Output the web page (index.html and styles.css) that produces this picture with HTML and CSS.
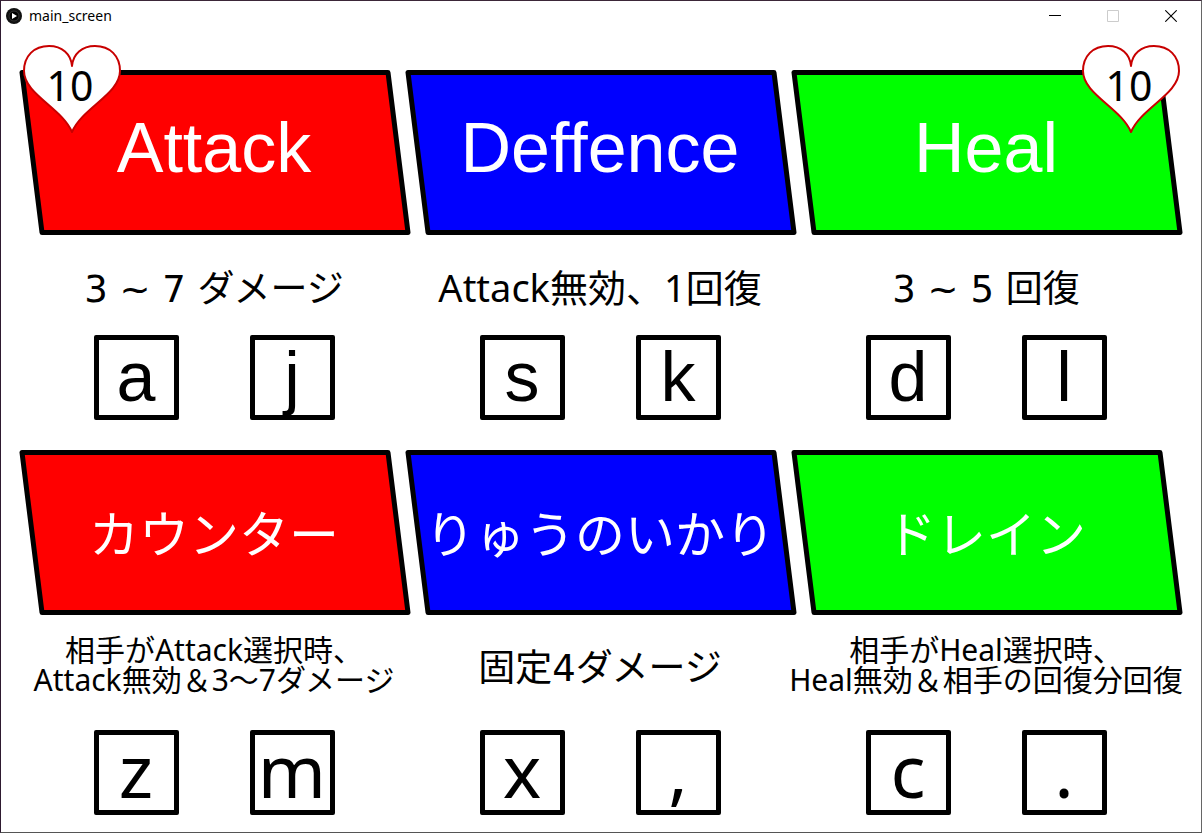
FILE: index.html
```html
<!DOCTYPE html>
<html lang="ja">
<head>
<meta charset="utf-8">
<title>main_screen</title>
<link rel="stylesheet" href="styles.css">
</head>
<body>
<div class="window">
  <header class="titlebar">
    <svg class="app-icon" viewBox="0 0 16 16" aria-hidden="true"><circle cx="8" cy="8" r="8" fill="#111"/><circle cx="8" cy="8" r="5" fill="#000" stroke="#333"/><path d="M6 5l5 3-5 3z" fill="#fff"/></svg>
    <h1 class="titlebar-text">main_screen</h1>
    <div class="controls">
      <button class="control" type="button" aria-label="Minimize"><svg viewBox="0 0 12 12"><path d="M0 5.5h12" stroke="#000"/></svg></button>
      <button class="control" type="button" aria-label="Maximize" disabled><svg viewBox="0 0 12 12"><path d="M.5.5h11v11H.5z" fill="none" stroke="#ccc"/></svg></button>
      <button class="control" type="button" aria-label="Close"><svg viewBox="0 0 12 12"><path d="M.3.3l11.4 11.4M11.7.3L.3 11.7" stroke="#000" stroke-width="1.1"/></svg></button>
    </div>
  </header>
  <main class="board">
    <div class="life life-left">
      <svg class="heart" viewBox="0 0 100 90" aria-hidden="true"><path d="M50 22C49 10 40 2 27 2C12 2 2 12 2 27C2 50 40 64 50 88C60 64 98 50 98 27C98 12 88 2 73 2C60 2 51 10 50 22z"/></svg>
      <span class="life-value">10</span>
    </div>
    <div class="life life-right">
      <svg class="heart" viewBox="0 0 100 90" aria-hidden="true"><path d="M50 22C49 10 40 2 27 2C12 2 2 12 2 27C2 50 40 64 50 88C60 64 98 50 98 27C98 12 88 2 73 2C60 2 51 10 50 22z"/></svg>
      <span class="life-value">10</span>
    </div>

    <section class="row row-basic">
      <article class="card red">
        <div class="banner"><svg class="shape" viewBox="0 0 386 160" preserveAspectRatio="none" aria-hidden="true"><path d="M1 .5H367L387 160.5H21z"/></svg><h2 class="name">Attack</h2></div>
        <p class="note numeric">3 ~ 7 ダメージ</p>
        <div class="keys"><button class="key" type="button">a</button><button class="key" type="button">j</button></div>
      </article>
      <article class="card blue">
        <div class="banner"><svg class="shape" viewBox="0 0 386 160" preserveAspectRatio="none" aria-hidden="true"><path d="M1 .5H367L387 160.5H21z"/></svg><h2 class="name">Deffence</h2></div>
        <p class="note">Attack無効、1回復</p>
        <div class="keys"><button class="key" type="button">s</button><button class="key" type="button">k</button></div>
      </article>
      <article class="card green">
        <div class="banner"><svg class="shape" viewBox="0 0 386 160" preserveAspectRatio="none" aria-hidden="true"><path d="M1 .5H367L387 160.5H21z"/></svg><h2 class="name">Heal</h2></div>
        <p class="note numeric">3 ~ 5 回復</p>
        <div class="keys"><button class="key" type="button">d</button><button class="key" type="button">l</button></div>
      </article>
    </section>

    <section class="row row-special">
      <article class="card red">
        <div class="banner"><svg class="shape" viewBox="0 0 386 160" preserveAspectRatio="none" aria-hidden="true"><path d="M1 .5H367L387 160.5H21z"/></svg><h2 class="name">カウンター</h2></div>
        <p class="note small">相手がAttack選択時、<br>Attack無効＆3～7ダメージ</p>
        <div class="keys"><button class="key" type="button">z</button><button class="key" type="button">m</button></div>
      </article>
      <article class="card blue">
        <div class="banner"><svg class="shape" viewBox="0 0 386 160" preserveAspectRatio="none" aria-hidden="true"><path d="M1 .5H367L387 160.5H21z"/></svg><h2 class="name">りゅうのいかり</h2></div>
        <p class="note numeric">固定4ダメージ</p>
        <div class="keys"><button class="key" type="button">x</button><button class="key" type="button">,</button></div>
      </article>
      <article class="card green">
        <div class="banner"><svg class="shape" viewBox="0 0 386 160" preserveAspectRatio="none" aria-hidden="true"><path d="M1 .5H367L387 160.5H21z"/></svg><h2 class="name">ドレイン</h2></div>
        <p class="note small">相手がHeal選択時、<br>Heal無効＆相手の回復分回復</p>
        <div class="keys"><button class="key" type="button">c</button><button class="key" type="button">.</button></div>
      </article>
    </section>
  </main>
</div>
</body>
</html>
```
FILE: styles.css
```css
* { box-sizing: border-box; }
body { margin: 0; background: #fff; color: #000; }
h1, h2, p { margin: 0; font-weight: 400; }
button { padding: 0; background: none; color: inherit; }

.window {
  min-height: 100vh;
  border: 1px solid;
  border-color: #3b2638 #666 #555 #2e1a30;
  background: #fff;
}

.titlebar { display: flex; align-items: center; height: 30px; padding: 0 1px 0 5px; }
.app-icon { width: 16px; height: 16px; margin-right: 7px; }
.titlebar-text { font: 14px/20px "Noto Sans", sans-serif; }
.controls { display: flex; margin-left: auto; }
.control { display: grid; place-items: center; width: 58px; height: 30px; border: 0; }
.control svg { width: 12px; height: 12px; }

.board { position: relative; padding: 41px 22px 16px 20px; }

.life {
  position: absolute;
  top: 13px;
  z-index: 1;
  display: grid;
  place-items: center;
  width: 100px;
  height: 90px;
  padding: 0 4px 8px 0;
}
.life-left { left: 21px; }
.life-right { right: 20px; }
.heart { position: absolute; top: 0; left: 0; width: 100px; height: 90px; }
.heart path { fill: #fff; stroke: #c80000; stroke-width: 2; stroke-linejoin: round; }
.life-value { position: relative; font: 41px/48px "Noto Sans", sans-serif; }

.row { display: grid; grid-template-columns: repeat(3, minmax(0, 1fr)); }
.row-basic { margin-bottom: 32px; }

.banner { position: relative; display: grid; place-items: center; height: 160px; color: #fff; }
.shape { position: absolute; inset: 0; width: 100%; height: 100%; overflow: visible; }
.shape path { stroke: #000; stroke-width: 5; stroke-linejoin: round; vector-effect: non-scaling-stroke; }
.red .shape path { fill: #f00; }
.blue .shape path { fill: #00f; }
.green .shape path { fill: #0f0; }

.name { position: relative; white-space: nowrap; }
.row-basic .name { padding-bottom: 8px; font: 70px/80px "Liberation Sans", sans-serif; }
.row-special .name { padding-bottom: 2px; font: 50px/70px "Noto Sans CJK JP", sans-serif; }

.note {
  display: grid;
  place-content: center;
  height: 103px;
  padding-top: 6px;
  font: 38px/48px "Noto Sans", "Noto Sans CJK JP", sans-serif;
  text-align: center;
  white-space: nowrap;
}
.note.numeric { padding-top: 12px; font-family: "DejaVu Sans", "Noto Sans CJK JP", sans-serif; font-size: 37px; }
.row-special .note { height: 118px; padding: 0 0 4px; }
.row-special .note.small { padding-bottom: 12px; font-size: 30px; line-height: 30px; }

.keys { display: flex; justify-content: center; gap: 71px; }
.key { width: 85px; height: 85px; border: 5px solid #000; border-radius: 2px; }
.row-basic .key { font: 70px/75px "Liberation Sans", sans-serif; }
.row-special .key { padding-bottom: 6px; font: 73px/69px "Noto Sans", sans-serif; }
```
